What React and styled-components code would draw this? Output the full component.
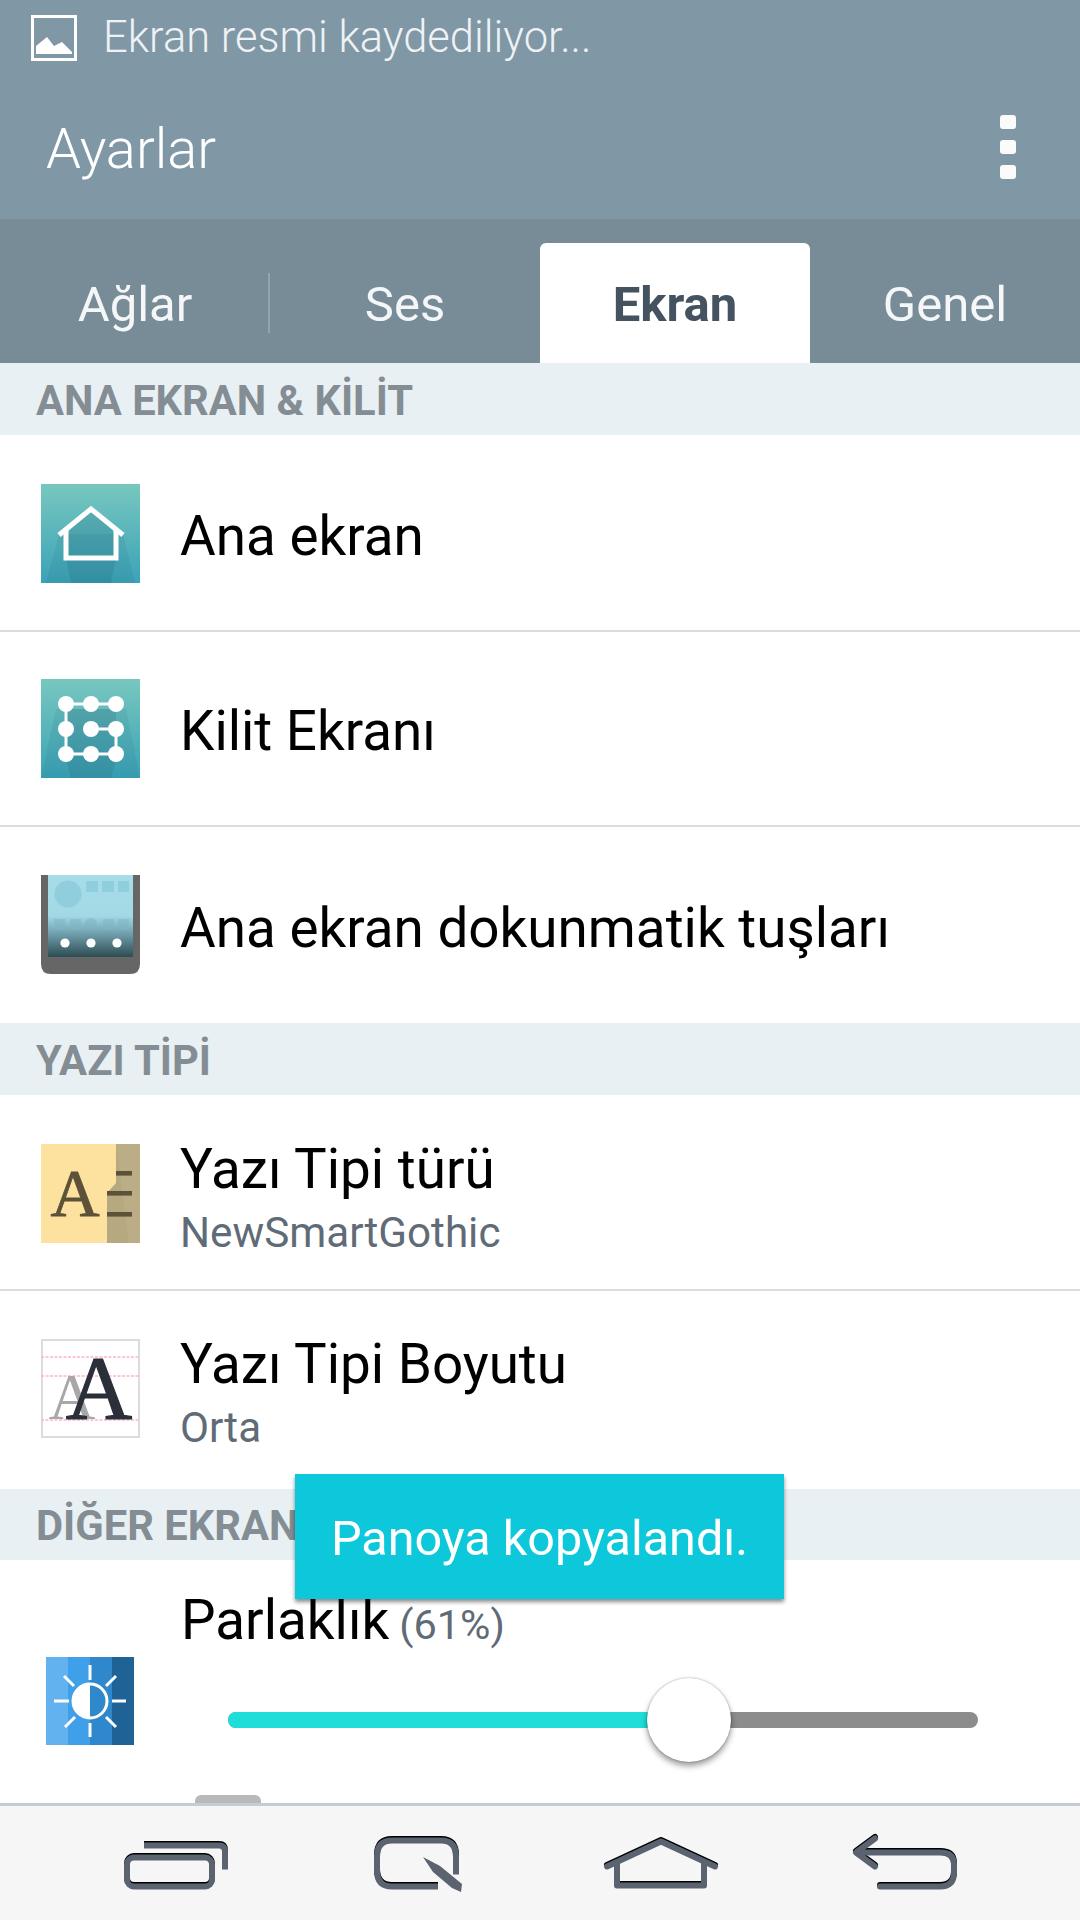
import React from 'react';
import styled, { createGlobalStyle } from 'styled-components';

const Global = createGlobalStyle`
  html, body { margin: 0; padding: 0; background: #fff; }
  * { box-sizing: border-box; }
`;

const Page = styled.div`
  position: relative; width: 1080px; height: 1920px; overflow: hidden;
  display: flex; flex-direction: column; background: #fff;
  font-family: Roboto, "Noto Sans", sans-serif;
`;
const StatusBar = styled.div`
  height: 75px; background: #8097a5; display: flex; align-items: center; gap: 26px; padding: 0 0 0 31px;
  color: #eef2f4; font-size: 43.5px; font-weight: 300; white-space: nowrap;
`;
const StatusGlyph = styled.svg`width: 46px; height: 46px; flex: none;`;
const ActionBar = styled.div`
  height: 144px; background: #8097a5; display: flex; align-items: center; justify-content: space-between;
  padding: 0 64px 0 46px; color: #fff; font-size: 56px; font-weight: 300;
`;
const ActionTitle = styled.div`padding-top: 3px;`;
const Dots = styled.div`display: flex; flex-direction: column; gap: 11px;`;
const Dot = styled.span`display: block; width: 16px; height: 14px; background: #fbfbfb; border-radius: 3px;`;
const TabBar = styled.div`
  height: 144px; background: #788c98; display: grid; grid-template-columns: repeat(4, 270px); padding-top: 24px;
`;
const Tab = styled.div`
  position: relative; display: flex; align-items: center; justify-content: center; font-size: 49px;
  color: ${p => (p.$active ? '#44535f' : '#f4f6f7')};
  background: ${p => (p.$active ? '#fff' : 'transparent')};
  font-weight: ${p => (p.$active ? 700 : 400)};
  border-radius: 6px 6px 0 0;
  padding-top: 2px;
`;
const TabDivider = styled.span`
  position: absolute; right: 0; top: 30px; width: 2px; height: 60px; background: #93a4ae;
`;
const Section = styled.div`
  height: ${p => p.$h || 72}px; background: #e8f0f3; padding: 2px 0 0 36px; display: flex; align-items: center;
  color: #838d93; font-size: 41.7px; font-weight: 700;
`;
const Row = styled.div`
  height: ${p => p.$h || 196}px; display: flex; align-items: center; gap: 40px;
  padding: ${p => p.$shift || 0}px 0 ${p => p.$lift || 0}px 41px;
  ${p => (p.$line ? 'border-bottom: 2px solid #dcdcdc;' : '')}
`;
const IconBox = styled.svg`width: 99px; height: 99px; flex: none; display: block;`;
const RowBody = styled.div`display: flex; flex-direction: column; padding-top: ${p => p.$top || 5}px;`;
const Title = styled.div`font-size: 54.8px; color: #000; line-height: 60px;`;
const Sub = styled.div`font-size: 42.2px; color: #5f6b76; line-height: 46px; margin-top: 11px;`;
const BrightRow = styled.div`
  position: relative; height: 243px; display: grid; grid-template-columns: 181px 1fr;
`;
const BrightIcon = styled.svg`width: 88px; height: 88px; margin: 97px 0 0 46px; display: block;`;
const BrightBody = styled.div`display: flex; flex-direction: column; padding-top: 30px;`;
const Percent = styled.span`font-size: 41.5px; color: #5f6b76; margin-left: 10px;`;
const Track = styled.div`
  position: relative; width: 750px; height: 16px; margin: 57px 0 0 47px; background: #8c8c8c; border-radius: 8px;
`;
const Fill = styled.div`height: 100%; background: #1fded9; border-radius: 8px 0 0 8px;`;
const Thumb = styled.div`
  position: absolute; top: -34px; margin-left: -42px; width: 84px; height: 84px; border-radius: 50%;
  background: #fff; box-shadow: 0 4px 6px rgba(0,0,0,.4), 0 0 2px rgba(0,0,0,.35);
`;
const ScrollTab = styled.div`
  position: absolute; left: 195px; bottom: 0; width: 66px; height: 8px; background: #b9b9b9; border-radius: 6px 6px 0 0;
`;
const NavBar = styled.div`
  flex: 1; background: #f6f6f7; border-top: 3px solid #c5cbce; display: block;
`;
const NavArt = styled.svg`display: block; width: 1080px; height: 114px;`;
const Toast = styled.div`
  position: absolute; left: 295px; top: 1474px; width: 489px; height: 125px; background: #0dc8db; padding-top: 3px;
  color: #fff; font-size: 48.5px; font-weight: 400; display: flex; align-items: center; justify-content: center;
  box-shadow: 0 3px 4px rgba(0,0,0,.45);
`;

const HomeIcon = () => (
  <IconBox viewBox="0 0 99 99">
    <defs>
      <linearGradient id="tealA" x1="0" y1="0" x2="0" y2="1">
        <stop offset="0" stopColor="#78c7bf" /><stop offset="1" stopColor="#3aa3b7" />
      </linearGradient>
    </defs>
    <rect width="99" height="99" fill="url(#tealA)" />
    <path d="M18 50 L5 99 H94 L82 50 Z" fill="#1c5a70" opacity=".1" />
    <path d="M25 50 L50 27 L75 50 V74 L70 99 H30 L25 74 Z" fill="#1c5a70" opacity=".18" />
    <path d="M18 51 L50 25 L82 51" fill="none" stroke="#fff" strokeWidth="5" />
    <path d="M25 46 V74 H75 V46" fill="none" stroke="#fff" strokeWidth="5" />
  </IconBox>
);
const LockIcon = () => (
  <IconBox viewBox="0 0 99 99">
    <defs>
      <linearGradient id="tealB" x1="0" y1="0" x2="0" y2="1">
        <stop offset="0" stopColor="#78c7bf" /><stop offset="1" stopColor="#3aa3b7" />
      </linearGradient>
    </defs>
    <rect width="99" height="99" fill="url(#tealB)" />
    <path d="M15 30 L0 99 H99 L85 30 Z" fill="#1c5a70" opacity=".1" />
    <path d="M25 30 H75 V80 L70 99 H30 L25 80 Z" fill="#1c5a70" opacity=".16" />
    <path d="M50 50 H75 V75 H25 V25 H75" fill="none" stroke="#fff" strokeWidth="3" />
    {[25, 50, 75].flatMap(y => [25, 50, 75].map(x => <circle key={x + '-' + y} cx={x} cy={y} r="8" fill="#fff" />))}
  </IconBox>
);
const KeysIcon = () => (
  <IconBox viewBox="0 0 99 99">
    <defs>
      <linearGradient id="keysG" x1="0" y1="0" x2="0" y2="1">
        <stop offset="0" stopColor="#a6dde9" /><stop offset=".5" stopColor="#a2d9e5" /><stop offset=".72" stopColor="#6f9eab" /><stop offset="1" stopColor="#2d4c52" />
      </linearGradient>
    </defs>
    <path d="M0 0 H99 V89 Q99 99 89 99 H10 Q0 99 0 89 Z" fill="#666" />
    <rect x="7" y="0" width="85" height="82" fill="url(#keysG)" />
    <g fill="#8ccbdc" opacity=".8">
      <circle cx="27" cy="19" r="13.5" />
      <rect x="45" y="6" width="12" height="11" /><rect x="61" y="6" width="12" height="11" /><rect x="77" y="6" width="11" height="11" />
    </g>
    <g fill="#7db6c6" opacity=".5">
      <rect x="13" y="44" width="11" height="11" /><rect x="29" y="44" width="11" height="11" /><circle cx="50" cy="49" r="6" />
      <rect x="62" y="44" width="11" height="11" /><rect x="77" y="44" width="11" height="11" />
    </g>
    <g fill="#fff"><circle cx="24" cy="68" r="4.6" /><circle cx="50" cy="68" r="4.6" /><circle cx="76" cy="68" r="4.6" /></g>
  </IconBox>
);
const FontTypeIcon = () => (
  <IconBox viewBox="0 0 99 99">
    <rect width="99" height="99" fill="#fde29f" />
    <path d="M75 0 H99 V99 H66 V49 L75 39 Z" fill="#b7a97f" />
    <path d="M75 0 L88 99 H99 V0 Z" fill="#fff" opacity=".06" />
    <text x="34" y="72" textAnchor="middle" fontFamily="'Liberation Serif', serif" fontSize="68" stroke="#5b5238" strokeWidth=".8" fill="#5b5238">A</text>
    <g fill="#5b5238"><rect x="75" y="27" width="16" height="4.6" /><rect x="66" y="47" width="25" height="4.6" /><rect x="66" y="68" width="25" height="4.6" /></g>
  </IconBox>
);
const FontSizeIcon = () => (
  <IconBox viewBox="0 0 99 99">
    <rect x="1" y="1" width="97" height="97" fill="#fff" stroke="#dcdcdc" strokeWidth="2" />
    <g stroke="#ffb3d0" strokeWidth="1.5" strokeDasharray="3 1.5">
      <path d="M0 18 H99" /><path d="M0 37 H99" /><path d="M0 81 H99" />
    </g>
    <text x="31" y="80" textAnchor="middle" fontFamily="'Liberation Serif', serif" fontSize="65" fill="#a8a8a8">A</text>
    <text x="58" y="80" textAnchor="middle" fontFamily="'Liberation Serif', serif" fontSize="92" fontWeight="400" stroke="#2a2f3a" strokeWidth="1.2" fill="#2a2f3a">A</text>
  </IconBox>
);

const rays = [[44, 8, 44, 23], [44, 66, 44, 80], [8, 44, 23, 44], [66, 44, 80, 44], [18, 19, 28, 29], [60, 29, 70, 19], [19, 70, 29, 60], [60, 60, 70, 70]];

const NavStrokes = ({ color, dy }) => (
  <g fill="none" stroke={color} strokeWidth="6" strokeLinejoin="round" transform={`translate(0 ${dy})`}>
    <rect x="127" y="1857" width="85" height="29" rx="7" />
    <path d="M144 1845 H219 Q225 1845 225 1851 V1869" />
    <path d="M438 1886 H392 Q377 1886 377 1870 V1856 Q377 1840 392 1840 H441 Q456 1840 456 1856 V1874" />
    <path d="M607 1866 L661 1841 L715 1866" strokeLinecap="round" />
    <path d="M617 1862 V1885 H704 V1862" />
    <path d="M875 1838 L856 1852 L875 1866" strokeLinecap="round" />
    <path d="M858 1852 H940 Q954 1852 954 1864 V1872 Q954 1886 940 1886 H880" strokeLinecap="round" />
  </g>
);

export default function App() {
  const level = 61.5;
  return (
    <Page>
      <Global />
      <StatusBar>
        <StatusGlyph viewBox="0 0 46 46">
          <rect x="1.5" y="1.5" width="43" height="43" fill="none" stroke="#fff" strokeWidth="3" />
          <path d="M5 39 V31 L16 22 L23 31 L31 27 L41 37 V39 Z" fill="#fff" />
        </StatusGlyph>
        Ekran resmi kaydediliyor...
      </StatusBar>
      <ActionBar>
        <ActionTitle>Ayarlar</ActionTitle>
        <Dots><Dot /><Dot /><Dot /></Dots>
      </ActionBar>
      <TabBar>
        <Tab>Ağlar<TabDivider /></Tab>
        <Tab>Ses</Tab>
        <Tab $active>Ekran</Tab>
        <Tab>Genel</Tab>
      </TabBar>
      <Section>ANA EKRAN &amp; KİLİT</Section>
      <Row $line $h={197} $shift={2}><HomeIcon /><RowBody><Title>Ana ekran</Title></RowBody></Row>
      <Row $line $h={195}><LockIcon /><RowBody><Title>Kilit Ekranı</Title></RowBody></Row>
      <Row $h={196} $lift={2}><KeysIcon /><RowBody $top={7}><Title>Ana ekran dokunmatik tuşları</Title></RowBody></Row>
      <Section>YAZI TİPİ</Section>
      <Row $line $h={196} $shift={3}><FontTypeIcon /><RowBody $top={7}><Title>Yazı Tipi türü</Title><Sub>NewSmartGothic</Sub></RowBody></Row>
      <Row $h={198} $lift={3}><FontSizeIcon /><RowBody $top={8}><Title>Yazı Tipi Boyutu</Title><Sub>Orta</Sub></RowBody></Row>
      <Section $h={71}>DİĞER EKRAN AYARLARI</Section>
      <BrightRow>
        <BrightIcon viewBox="0 0 88 88">
          <rect x="0" width="22" height="88" fill="#62b2f0" />
          <rect x="22" width="22" height="88" fill="#3f9fe8" />
          <rect x="44" width="22" height="88" fill="#2f88cc" />
          <rect x="66" width="22" height="88" fill="#1e6296" />
          <circle cx="44" cy="44" r="17" fill="none" stroke="#fff" strokeWidth="3" />
          <path d="M44 27 A17 17 0 0 0 44 61 Z" fill="#fff" />
          <g stroke="#fff" strokeWidth="3">
            {rays.map(r => <line key={r.join()} x1={r[0]} y1={r[1]} x2={r[2]} y2={r[3]} />)}
          </g>
        </BrightIcon>
        <BrightBody>
          <Title>Parlaklık<Percent>(61%)</Percent></Title>
          <Track>
            <Fill style={{ width: `${level}%` }} />
            <Thumb style={{ left: `${level}%` }} />
          </Track>
        </BrightBody>
        <ScrollTab />
      </BrightRow>
      <NavBar>
        <NavArt viewBox="0 1806 1080 114">
          <NavStrokes color="#000" dy={-1} />
          <NavStrokes color="#5c6370" dy={0.5} />
          <path d="M427 1859 L458 1891" stroke="#f6f6f7" strokeWidth="16" fill="none" />
          <path d="M423 1857 L440 1866 L462 1884 L461 1892 L452 1888 L433 1872 Z" fill="#5c6370" />
        </NavArt>
      </NavBar>
      <Toast>Panoya kopyalandı.</Toast>
    </Page>
  );
}
